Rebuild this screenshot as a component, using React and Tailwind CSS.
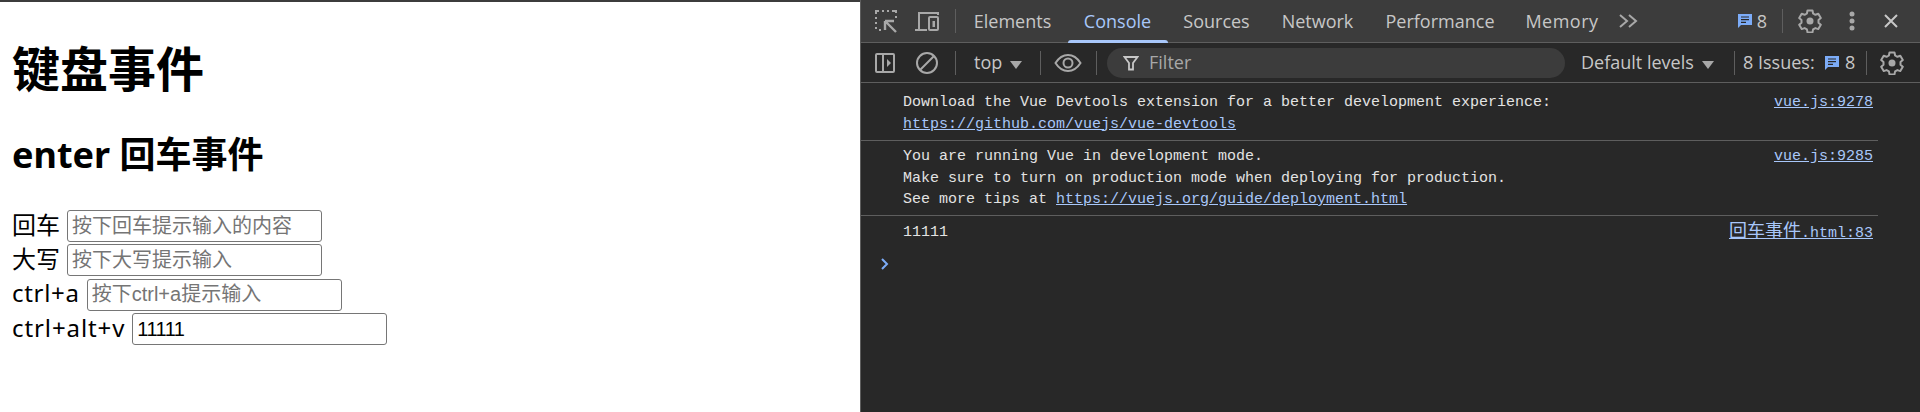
const uiFont = "font-['Open_Sans','Noto_Sans_CJK_SC',sans-serif]";
const monoFont = "font-['Liberation_Mono','Noto_Sans_CJK_SC',monospace]";

function InspectIcon() {
  return (
    <svg width="24" height="24" viewBox="0 0 24 24" fill="none" stroke="#a8a8a8" strokeWidth="2">
      <path d="M2 20v-2M2 15v-2M2 10V8M2 5V2h3M8 2h2M13 2h2M18 2h4v2M22 7v2" />
      <path d="M5 21h2" />
      <path d="M11 12h9M11 12v9M11 12l11 11" strokeWidth="2.400" />
    </svg>
  );
}

function DeviceIcon() {
  return (
    <svg width="26" height="24" viewBox="0 0 26 24" fill="none" stroke="#a8a8a8" strokeWidth="2">
      <path d="M1 21h12M5 20V4h19v2" />
      <rect x="15" y="8" width="9" height="13" rx="1" />
      <rect x="18.500" y="12" width="2.500" height="6" fill="#a8a8a8" stroke="none" />
    </svg>
  );
}

function SidebarIcon() {
  return (
    <svg width="22" height="22" viewBox="0 0 22 22" fill="none" stroke="#a8a8a8" strokeWidth="2">
      <rect x="2" y="2" width="18" height="18" rx="1" />
      <path d="M9 2v18" />
      <path d="M13 7l4 4-4 4z" fill="#a8a8a8" stroke="none" />
    </svg>
  );
}

function ClearIcon() {
  return (
    <svg width="24" height="24" viewBox="0 0 24 24" fill="none" stroke="#a8a8a8" strokeWidth="2">
      <circle cx="12" cy="12" r="10" />
      <path d="M5 19L19 5" />
    </svg>
  );
}

function EyeIcon() {
  return (
    <svg width="28" height="20" viewBox="0 0 28 20" fill="none" stroke="#a8a8a8" strokeWidth="2">
      <path d="M1.500 10C5 4.500 9 2 14 2s9 2.500 12.500 8C23 15.500 19 18 14 18S5 15.500 1.500 10z" />
      <circle cx="14" cy="10" r="4.500" />
    </svg>
  );
}

function GearIcon() {
  return (
    <svg width="24" height="24" viewBox="0 0 24 24" fill="none" stroke="#a8a8a8" strokeWidth="2" strokeLinejoin="round">
      <path d="M9.500 1.500h5l.6 3 2.300 1.300 2.900-1 2.500 4.300-2.300 2v2.700l2.300 2-2.500 4.300-2.900-1-2.300 1.300-.6 3h-5l-.6-3-2.300-1.300-2.900 1-2.500-4.300 2.300-2v-2.700l-2.300-2 2.500-4.300 2.900 1 2.300-1.300z" />
      <circle cx="12" cy="12" r="3.500" fill="#a8a8a8" stroke="none" />
    </svg>
  );
}

function IssueIcon() {
  return (
    <svg width="16" height="16" viewBox="0 0 16 16">
      <path d="M1 1h14v11H4l-3 3z" fill="#7cacf8" />
      <path d="M4 4h8M4 6.700h8M4 9.400h5" stroke="#282828" strokeWidth="1.200" />
    </svg>
  );
}

function Caret() {
  return <span className="ml-2 w-0 h-0 border-x-[6px] border-x-transparent border-t-[8px] border-t-[#a8a8a8] mt-1" />;
}

function Divider({ className }) {
  return <div className={`w-px h-6 bg-[#5e5e5e] ${className}`} />;
}

function FormRow({ label, labelClass, placeholder, value }) {
  return (
    <div className="h-[34.3px] flex items-center">
      <span className={labelClass}>{label}</span>
      <input
        readOnly
        value={value}
        placeholder={placeholder}
        className={`ml-[7px] w-[255px] h-8 border border-[#767676] rounded-[3px] px-1 text-[20px] placeholder:text-[#757575] outline-none font-['Liberation_Sans','Noto_Sans_CJK_SC',sans-serif] ${value ? "tracking-[-0.5px]" : ""}`}
      />
    </div>
  );
}

function LogLine({ children, source, padding, last }) {
  return (
    <div className={`flex justify-between pl-[42px] pr-[5px] ${padding} ${last ? "" : "border-b border-[#5e5e5e]"}`}>
      <div className="text-[#e3e3e3]">{children}</div>
      {source}
    </div>
  );
}

function SourceLink({ children }) {
  return <a className="text-[#a8c7fa] underline">{children}</a>;
}

export default function App() {
  const tabs = [
    { name: "Elements", w: "w-[109px]" },
    { name: "Console", w: "w-[101px]", active: true },
    { name: "Sources", w: "w-[97px]" },
    { name: "Network", w: "w-[105px]" },
    { name: "Performance", w: "w-[140px]" },
    { name: "Memory", w: "w-[104px] tracking-[0.5px]" },
  ];

  return (
    <div className="w-[1920px] h-[412px] flex overflow-hidden">
      <div className="w-[860px] shrink-0 border-t-2 border-[#3c3c3c] bg-white text-black px-3 text-2xl font-['Noto_Sans','Noto_Sans_CJK_SC',sans-serif]">
        <h1 className="text-5xl font-bold mt-[35px] leading-[64px]">键盘事件</h1>
        <h2 className="text-4xl font-bold mt-[30px] leading-[48px]">enter 回车事件</h2>
        <div className="mt-[30px]">
          <FormRow label="回车" labelClass="pb-[2px]" placeholder="按下回车提示输入的内容" value="" />
          <FormRow label="大写" labelClass="pb-[2px]" placeholder="按下大写提示输入" value="" />
          <FormRow label="ctrl+a" labelClass="pb-[3px] tracking-[0.7px]" placeholder="按下ctrl+a提示输入" value="" />
          <FormRow label="ctrl+alt+v" labelClass="pb-[3px] tracking-[0.9px]" placeholder="" value="11111" />
        </div>
      </div>

      <div className="flex-1 flex flex-col bg-[#282828] border-l border-[#5e5e5e]">
        <div className={`h-[43px] shrink-0 flex items-center bg-[#3c3c3c] border-b border-[#5e5e5e] text-[18px] text-[#c7c7c7] ${uiFont}`}>
          <div className="ml-[13px] flex"><InspectIcon /></div>
          <div className="ml-[16px] flex"><DeviceIcon /></div>
          <Divider className="ml-[15px]" />
          <div className="flex h-full ml-[2px]">
            {tabs.map((tab) => (
              <div
                key={tab.name}
                className={`${tab.w} h-full flex items-center justify-center relative ${tab.active ? "text-[#a8c7fa]" : ""}`}
              >
                {tab.name}
                {tab.active && <div className="absolute -bottom-px left-px right-0 h-[3px] rounded-t bg-[#a8c7fa]" />}
              </div>
            ))}
          </div>
          <svg className="ml-[4px]" width="20" height="16" viewBox="0 0 20 16" fill="none" stroke="#a8a8a8" strokeWidth="2">
            <path d="M2 2l7 6-7 6M11 2l7 6-7 6" />
          </svg>
          <div className="flex items-center ml-auto">
            <IssueIcon />
            <span className="ml-[4px]">8</span>
            <Divider className="ml-[15px]" />
            <div className="ml-[15px] flex"><GearIcon /></div>
            <svg className="ml-[26px]" width="8" height="20" viewBox="0 0 8 20" fill="#a8a8a8">
              <circle cx="4" cy="3" r="2.500" /><circle cx="4" cy="10" r="2.500" /><circle cx="4" cy="17" r="2.500" />
            </svg>
            <svg className="ml-[27px] mr-[21px]" width="16" height="16" viewBox="0 0 16 16" stroke="#c7c7c7" strokeWidth="2">
              <path d="M2 2l12 12M14 2L2 14" />
            </svg>
          </div>
        </div>

        <div className={`h-[40px] shrink-0 flex items-center border-b border-[#5e5e5e] text-[18px] text-[#c7c7c7] ${uiFont}`}>
          <div className="ml-[13px] flex"><SidebarIcon /></div>
          <div className="ml-[19px] flex"><ClearIcon /></div>
          <Divider className="ml-[16px]" />
          <div className="ml-[18px] w-[66px] flex items-center">top<Caret /></div>
          <Divider />
          <div className="ml-[13px] flex"><EyeIcon /></div>
          <Divider className="ml-[14px]" />
          <div className="ml-[10px] w-[458px] h-[30px] rounded-full bg-[#3c3c3c] flex items-center pl-[16px] text-[#a8a8a8]">
            <svg width="16" height="16" viewBox="0 0 16 16" fill="none" stroke="#c7c7c7" strokeWidth="1.800">
              <path d="M1.500 2h13L10 8v6.500H6V8z" />
            </svg>
            <span className="ml-[10px]">Filter</span>
          </div>
          <div className="ml-[16px] w-[153px] flex items-center">Default levels<Caret /></div>
          <Divider />
          <span className="ml-[8px] w-[78px]">8 Issues:</span>
          <div className="ml-[3px] flex"><IssueIcon /></div>
          <span className="ml-[5px] w-[11px]">8</span>
          <Divider className="ml-[10px]" />
          <div className="ml-[13px] flex"><GearIcon /></div>
        </div>

        <div className={`flex-1 pt-[3px] text-[15px] leading-[21.5px] ${monoFont}`}>
          <div className="w-[1017px]">
            <LogLine padding="pt-[6px] pb-[5px]" source={<SourceLink>vue.js:9278</SourceLink>}>
              <div>Download the Vue Devtools extension for a better development experience:</div>
              <a className="text-[#a8c7fa] underline">https://github.com/vuejs/vue-devtools</a>
            </LogLine>
            <LogLine padding="pt-[5px] pb-[4px]" source={<SourceLink>vue.js:9285</SourceLink>}>
              <div>You are running Vue in development mode.</div>
              <div>Make sure to turn on production mode when deploying for production.</div>
              <div>See more tips at <a className="text-[#a8c7fa] underline">https://vuejs.org/guide/deployment.html</a></div>
            </LogLine>
            <LogLine last padding="pt-[6px] pb-[4px]" source={<SourceLink><span className="text-[18px]">回车事件</span>.html:83</SourceLink>}>
              <div>11111</div>
            </LogLine>
          </div>
          <div className="pl-[19px] pt-[9px] flex">
            <svg width="10" height="14" viewBox="0 0 10 14" fill="none" stroke="#7cacf8" strokeWidth="2">
              <path d="M2 2l5 5-5 5" />
            </svg>
          </div>
        </div>
      </div>
    </div>
  );
}
